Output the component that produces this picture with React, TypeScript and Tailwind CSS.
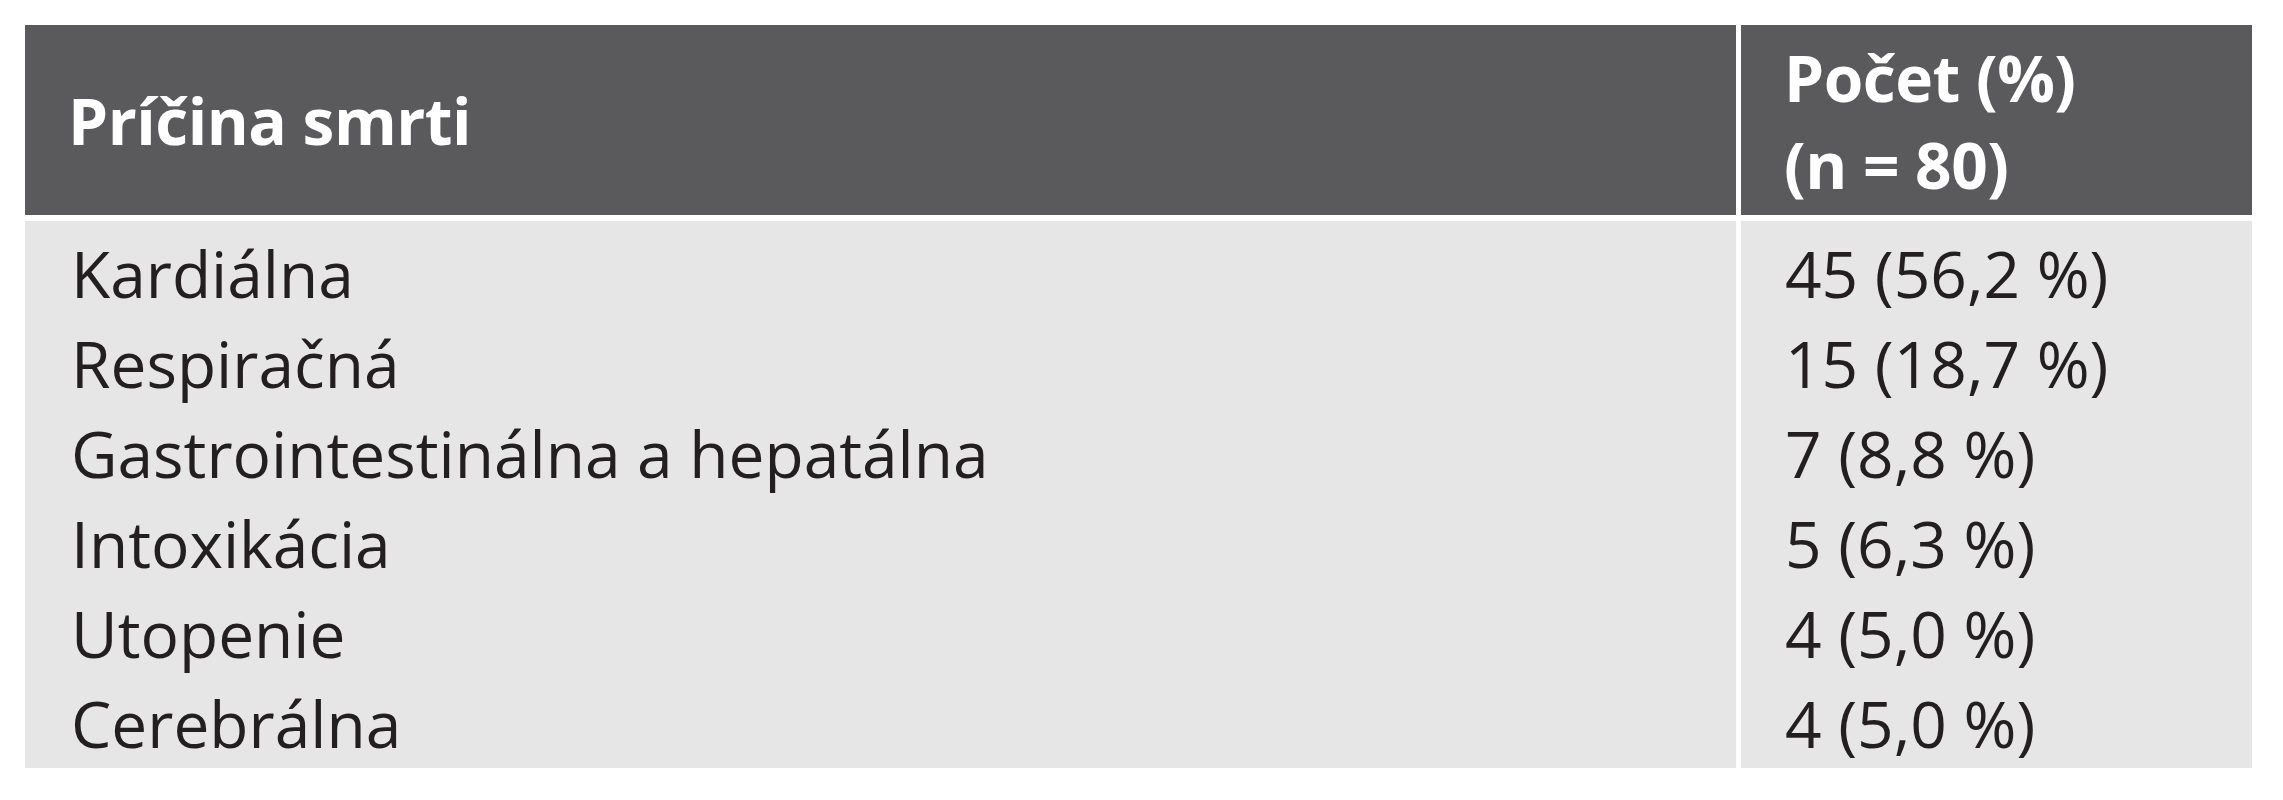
import React from 'react';

const rows = [
  { cause: 'Kardiálna', count: '45 (56,2 %)' },
  { cause: 'Respiračná', count: '15 (18,7 %)' },
  { cause: 'Gastrointestinálna a hepatálna', count: '7 (8,8 %)' },
  { cause: 'Intoxikácia', count: '5 (6,3 %)' },
  { cause: 'Utopenie', count: '4 (5,0 %)' },
  { cause: 'Cerebrálna', count: '4 (5,0 %)' },
];

const App: React.FC = () => {
  return (
    <div className="w-[2283px] h-[800px] bg-white pt-[25px] pl-[25px] font-['Open_Sans',sans-serif]">
      <div className="grid grid-cols-[1711px_511px] gap-x-[5px] gap-y-[6px]">
        <div className="bg-[#5a5a5c] h-[190px] flex items-center pl-[43px] text-white font-bold text-[64px] leading-[87px] tracking-[-0.5px]">
          Príčina smrti
        </div>
        <div className="bg-[#5a5a5c] h-[190px] pt-[9px] pl-[43px] text-white font-bold text-[64px] leading-[87px] tracking-[-0.5px]">
          <div>Počet (%)</div>
          <div>(n = 80)</div>
        </div>
        <div className="bg-[#e6e6e6] h-[547px] pt-[8px] pl-[46px] text-[#231f20] text-[64px] leading-[90px]">
          {rows.map((r, i) => (
            <div key={i}>{r.cause}</div>
          ))}
        </div>
        <div className="bg-[#e6e6e6] h-[547px] pt-[8px] pl-[44px] text-[#231f20] text-[64px] leading-[90px]">
          {rows.map((r, i) => (
            <div key={i}>{r.count}</div>
          ))}
        </div>
      </div>
    </div>
  );
};

export default App;
